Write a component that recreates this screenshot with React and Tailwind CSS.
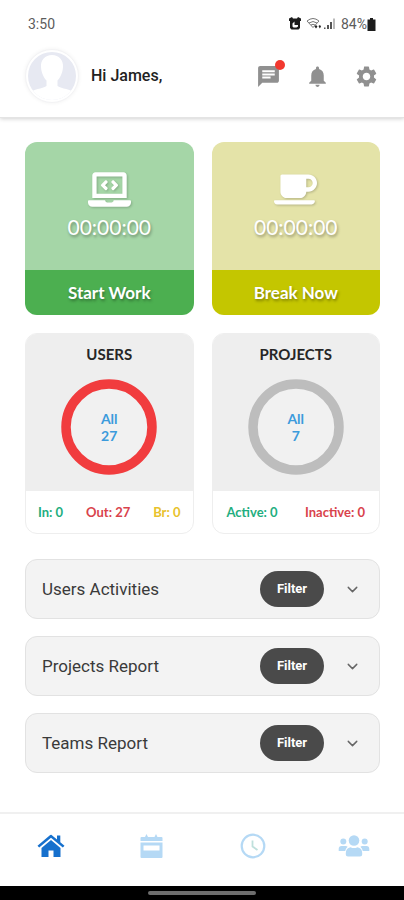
import React, { useState } from 'react';
import { FaCoffee, FaLaptopCode } from 'react-icons/fa';
import { MdChat, MdNotifications, MdSettings } from 'react-icons/md';
import { FiChevronDown } from 'react-icons/fi';

const timers = [
  {
    label: 'Start Work',
    Icon: FaLaptopCode,
    top: 'bg-[#a5d6a7]',
    bottom: 'bg-[#4caf50]',
  },
  {
    label: 'Break Now',
    Icon: FaCoffee,
    top: 'bg-[#e4e3a8]',
    bottom: 'bg-[#c4c600]',
  },
];

const stats = [
  {
    title: 'USERS',
    total: 27,
    ring: 'stroke-[#f13c3e]',
    padding: 'px-3',
    items: [
      { text: 'In: 0', color: 'text-[#1fae80]' },
      { text: 'Out: 27', color: 'text-[#d9434c]' },
      { text: 'Br: 0', color: 'text-[#e8c22c]' },
    ],
  },
  {
    title: 'PROJECTS',
    total: 7,
    ring: 'stroke-[#bdbdbd]',
    padding: 'px-3.5',
    items: [
      { text: 'Active: 0', color: 'text-[#1fae80]' },
      { text: 'Inactive: 0', color: 'text-[#d9434c]' },
    ],
  },
];

const reports = ['Users Activities', 'Projects Report', 'Teams Report'];

const HomeIcon = () => (
  <svg width="28" height="24" viewBox="0 0 28 24" fill="currentColor" aria-hidden="true">
    <path d="M14 .5L20 5.500V1.500H23.300V8.200L27.500 11.700L25.800 13.600L14 3.800L2.200 13.600L.5 11.700L12.600 1.400Q14 .3 15.400 1.400Z" />
    <path d="M14 6L23.500 13.900V23H16.500V16.500H11.500V23H4.500V13.900Z" />
  </svg>
);

const CalendarIcon = () => (
  <svg width="23" height="26" viewBox="0 0 23 26" fill="currentColor" aria-hidden="true">
    <path d="M1.500 4H5L6.500 1L8 4H14.500L16 1L17.500 4H21.500Q22.500 4 22.500 5V8H.5V5Q.5 4 1.500 4Z" />
    <path
      fillRule="evenodd"
      d="M.5 9.500H22.500V24Q22.500 25 21.500 25H1.500Q.5 25 .5 24ZM3.500 12.500V17.500H19.500V12.500Z"
    />
  </svg>
);

const ClockIcon = () => (
  <svg width="26" height="26" viewBox="0 0 26 26" fill="none" stroke="currentColor" aria-hidden="true">
    <circle cx="13" cy="13" r="11.300" strokeWidth="2.200" />
    <path d="M12.500 7.500V13.500L17.500 17" stroke="#bfe0dc" strokeWidth="1.800" />
  </svg>
);

const TeamIcon = () => (
  <svg width="32" height="24" viewBox="0 0 32 24" fill="currentColor" aria-hidden="true">
    <circle cx="16" cy="6.500" r="5.300" />
    <circle cx="5.300" cy="7.500" r="3" />
    <circle cx="26.700" cy="7.500" r="3" />
    <path d="M3.500 12H7.500Q9 12 9.600 12.700Q7.600 14.500 7.200 17H.7V15Q.7 12 3.500 12Z" />
    <path d="M28.500 12H24.500Q23 12 22.400 12.700Q24.400 14.500 24.800 17H31.300V15Q31.300 12 28.500 12Z" />
    <path d="M12.500 13.200Q16 15 19.500 13.200Q24 14 24.200 19V20.500Q24.200 22.500 22 22.500H10Q7.800 22.500 7.800 20.500V19Q8 14 12.500 13.200Z" />
  </svg>
);

const tabs = [
  { name: 'Home', Icon: HomeIcon },
  { name: 'Calendar', Icon: CalendarIcon },
  { name: 'Time', Icon: ClockIcon },
  { name: 'Team', Icon: TeamIcon },
];

const StatusIcons = () => (
  <svg width="48" height="14" viewBox="0 0 48 14" aria-hidden="true">
    {/* alarm */}
    <path d="M0 1.500L3 0L4 1.500H8L9 0L12 1.500V4H11V11L9.500 12.500H2.500L1 11V4H0Z" fill="#1c1c1c" />
    <path d="M3.500 6.500L5.500 4.500V8H9V9.500L7.500 10.500H4.500L3.500 9.500Z" fill="#fff" />
    {/* wifi */}
    <g stroke="#777" strokeWidth="1" fill="none">
      <path d="M18 4Q24 -1 30 4L24 10.500Z" />
      <path d="M20 6Q24 3 28 6M22 8Q24 6.500 26 8" />
    </g>
    <path d="M25.500 9.500L27 8L28.500 9.500L27 11.500ZM29.500 9L31 8L32 9.500L30.800 11.500Z" fill="#222" />
    {/* signal */}
    <g fill="#555">
      <rect x="35" y="10.500" width="1.500" height="1.500" />
      <rect x="38" y="8" width="2" height="4" />
      <rect x="41" y="5" width="2" height="7" />
    </g>
    <rect x="44" y="1.500" width="2" height="10.500" fill="#bbb" />
  </svg>
);

const Avatar = () => (
  <div className="flex size-[54px] shrink-0 items-center justify-center rounded-full border border-[#f3f3f5] bg-white shadow-[0_0_4px_rgba(0,0,0,0.06)]">
    <svg width="48" height="48" viewBox="0 0 48 48" aria-hidden="true">
      <defs>
        <clipPath id="avatar">
          <circle cx="24" cy="24" r="24" />
        </clipPath>
      </defs>
      <g clipPath="url(#avatar)">
        <rect width="48" height="48" fill="#e7e9f2" />
        <path
          d="M24 3C17 3 12.500 8 13 15C13.300 21 16 26 18.500 28.500V34C14 37 6 36.500 0 42V48H48V42C42 36.500 34 37 29.500 34V28.500C32 26 34.700 21 35 15C35.500 8 31 3 24 3Z"
          fill="#fff"
        />
      </g>
    </svg>
  </div>
);

const TimerCard = ({ label, Icon, top, bottom }) => (
  <button type="button" className="flex flex-1 flex-col overflow-hidden rounded-xl text-white">
    <span className={`flex h-32 w-full flex-col items-center pt-[26px] ${top}`}>
      <Icon size={43} className="drop-shadow-[1px_1px_1px_rgba(0,0,0,0.2)]" />
      <span className="text-[21px] leading-8 [text-shadow:1px_2px_3px_rgba(0,0,0,0.35)]">
        00:00:00
      </span>
    </span>
    <span
      className={`w-full text-[17px] leading-[45px] font-bold [text-shadow:1px_2px_3px_rgba(0,0,0,0.35)] ${bottom}`}
    >
      {label}
    </span>
  </button>
);

const StatCard = ({ title, total, ring, padding, items }) => (
  <section className="flex-1 overflow-hidden rounded-xl border border-[#eeeeee] bg-white">
    <div className="flex flex-col items-center bg-[#eeeeee] pt-2 pb-4">
      <h2 className="text-[15px] leading-6 font-bold text-[#262626]">{title}</h2>
      <div className="mt-[13px] grid place-items-center">
        <svg width="96" height="96" viewBox="0 0 96 96" className="col-start-1 row-start-1" aria-hidden="true">
          <circle cx="48" cy="48" r="43" strokeWidth="9.500" className={`fill-[#f1f1f1] ${ring}`} />
        </svg>
        <div className="col-start-1 row-start-1 text-center text-sm leading-[17px] font-bold text-[#3c9bdc]">
          <p>All</p>
          <p>{total}</p>
        </div>
      </div>
    </div>
    <div className={`flex justify-between text-[13px] leading-[42px] font-bold whitespace-nowrap ${padding}`}>
      {items.map((item) => (
        <span key={item.text} className={item.color}>
          {item.text}
        </span>
      ))}
    </div>
  </section>
);

const ReportRow = ({ title }) => {
  const [open, setOpen] = useState(false);

  return (
    <div className="flex items-center rounded-xl border border-[#e2e2e2] bg-[#f3f3f3] py-[11px] pr-[18px] pl-4 font-[Roboto,sans-serif]">
      <h3 className="flex-1 text-[17px] leading-6 text-[#3a3a3a]">{title}</h3>
      <button
        type="button"
        className="h-9 w-16 rounded-full bg-[#4a4a4a] text-[13px] font-bold text-white"
      >
        Filter
      </button>
      <button
        type="button"
        aria-label={`Toggle ${title}`}
        aria-expanded={open}
        onClick={() => setOpen(!open)}
        className="ml-5 text-[#666666]"
      >
        <FiChevronDown size={17} />
      </button>
    </div>
  );
};

const App = () => {
  const [activeTab, setActiveTab] = useState('Home');

  return (
    <div className="flex min-h-screen flex-col bg-white font-[Lato,sans-serif]">
      <header className="border-b border-[#e4e4e4] pt-3.5 pb-3.5 shadow-[0_1px_4px_rgba(0,0,0,0.18)]">
        <div className="flex items-center justify-between px-7 font-[Roboto,sans-serif] text-sm leading-5 text-[#5c5c5c]">
          <span>3:50</span>
          <div className="flex items-center">
            <StatusIcons />
            <span className="ml-1">84%</span>
            <svg width="9" height="13" viewBox="0 0 9 13" aria-hidden="true">
              <path d="M3 0H6V1.500H8.500V13H.5V1.500H3Z" fill="#1c1c1c" />
            </svg>
          </div>
        </div>
        <div className="mt-[15px] flex items-center px-[25px]">
          <Avatar />
          <h1 className="ml-3 flex-1 font-[Roboto,sans-serif] text-base leading-6 font-medium text-[#222222]">
            Hi James,
          </h1>
          <div className="flex items-center gap-6 text-[#909090]">
            <button type="button" aria-label="Messages" className="relative">
              <MdChat size={25} />
              <span className="absolute -top-1 -right-1 size-2.5 rounded-full bg-[#f2382f]" />
            </button>
            <button type="button" aria-label="Notifications">
              <MdNotifications size={25} />
            </button>
            <button type="button" aria-label="Settings">
              <MdSettings size={25} />
            </button>
          </div>
        </div>
      </header>

      <main className="flex flex-1 flex-col pt-6 pr-6 pb-6 pl-[25px]">
        <div className="flex gap-[18px]">
          {timers.map((timer) => (
            <TimerCard key={timer.label} {...timer} />
          ))}
        </div>
        <div className="mt-[18px] flex gap-[18px]">
          {stats.map((stat) => (
            <StatCard key={stat.title} {...stat} />
          ))}
        </div>
        <div className="mt-[25px] flex flex-col gap-[17px]">
          {reports.map((title) => (
            <ReportRow key={title} title={title} />
          ))}
        </div>
      </main>

      <nav className="flex border-t-2 border-[#f0f0f0] bg-white">
        {tabs.map(({ name, Icon }) => (
          <button
            key={name}
            type="button"
            aria-label={name}
            onClick={() => setActiveTab(name)}
            className={`flex h-[72px] flex-1 items-center justify-center pb-2 ${
              activeTab === name ? 'text-[#1670cd]' : 'text-[#b5d9f5]'
            }`}
          >
            <Icon />
          </button>
        ))}
      </nav>
      <div className="flex h-3.5 items-center justify-center bg-black">
        <div className="h-1 w-[108px] rounded-full bg-[#6e6e6e]" />
      </div>
    </div>
  );
};

export default App;
